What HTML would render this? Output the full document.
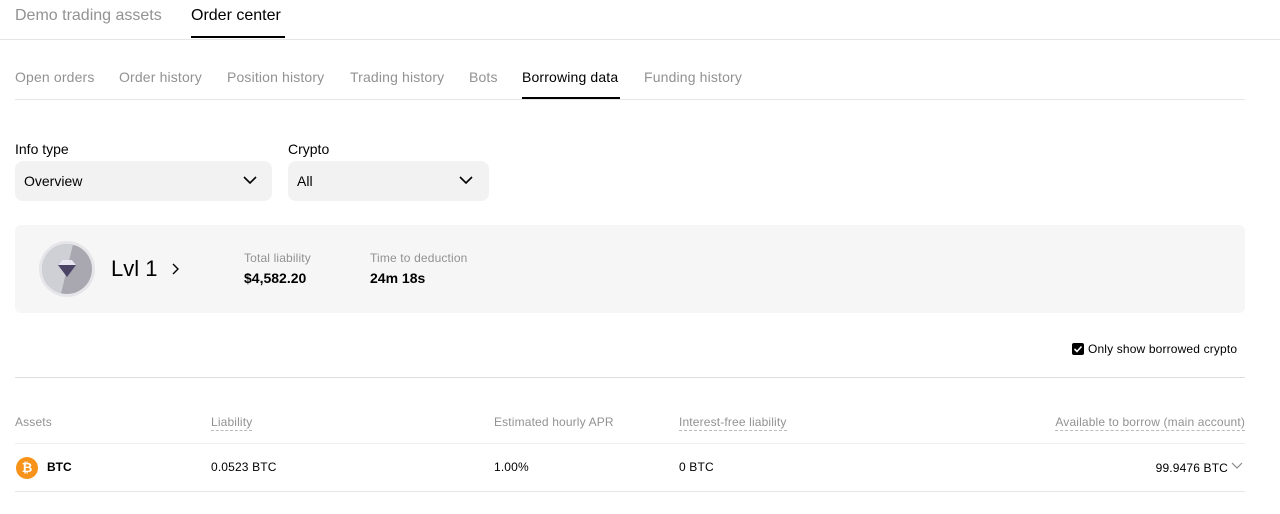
<!DOCTYPE html>
<html><head><style>
*{margin:0;padding:0;box-sizing:border-box}
body{width:1280px;height:514px;background:#fff;font-family:"Liberation Sans",sans-serif;color:#000;position:relative;overflow:hidden}
.a{position:absolute;white-space:nowrap}
.g{color:#929292}
.dash{border-bottom:1px dashed #bbb;padding-bottom:1px}
.s{letter-spacing:0.15px}
</style></head><body>
<div class="a g" style="left:15px;top:7px;font-size:16px">Demo trading assets</div>
<div class="a" style="left:191px;top:7px;font-size:16px">Order center</div>
<div class="a" style="left:191px;top:36px;width:94px;height:2px;background:#000"></div>
<div class="a" style="left:0;top:39px;width:1280px;height:1px;background:#e6e6e6"></div>

<div class="a g s" style="left:15px;top:69px;font-size:14px">Open orders</div>
<div class="a g s" style="left:119px;top:69px;font-size:14px">Order history</div>
<div class="a g s" style="left:227px;top:69px;font-size:14px">Position history</div>
<div class="a g s" style="left:350px;top:69px;font-size:14px">Trading history</div>
<div class="a g s" style="left:469px;top:69px;font-size:14px">Bots</div>
<div class="a s" style="left:522px;top:69px;font-size:14px">Borrowing data</div>
<div class="a g s" style="left:644px;top:69px;font-size:14px">Funding history</div>
<div class="a" style="left:522px;top:97px;width:98px;height:2px;background:#000"></div>
<div class="a" style="left:15px;top:99px;width:1230px;height:1px;background:#e6e6e6"></div>

<div class="a" style="left:15px;top:141px;font-size:14px">Info type</div>
<div class="a" style="left:288px;top:141px;font-size:14px">Crypto</div>
<div class="a" style="left:15px;top:161px;width:257px;height:40px;background:#f2f2f2;border-radius:8px"></div>
<div class="a" style="left:24px;top:173px;font-size:14px">Overview</div>
<svg class="a" style="left:242px;top:174px" width="16" height="12"><path d="M2 3l6 6 6-6" fill="none" stroke="#000" stroke-width="1.6"/></svg>
<div class="a" style="left:288px;top:161px;width:201px;height:40px;background:#f2f2f2;border-radius:8px"></div>
<div class="a" style="left:297px;top:173px;font-size:14px">All</div>
<svg class="a" style="left:458px;top:174px" width="16" height="12"><path d="M2 3l6 6 6-6" fill="none" stroke="#000" stroke-width="1.6"/></svg>

<div class="a" style="left:15px;top:225px;width:1230px;height:88px;background:#f6f6f6;border-radius:6px"></div>
<svg class="a" style="left:39px;top:241px" width="56" height="56"><circle cx="28" cy="28" r="28" fill="#e6e6ea"/><circle cx="28" cy="28" r="25" fill="#a9a8b0"/><path d="M34 3.5A25 25 0 0 0 28 3 25 25 0 0 0 13 48 25 25 0 0 0 22 52.5Z" fill="#cfcfd6"/><path d="M19 24l4-5h10l4 5-9 12z" fill="#4b4466"/><path d="M23 19h10l4 5H19z" fill="#e8e6f0"/></svg>
<div class="a" style="left:111px;top:256px;font-size:22px">Lvl 1</div>
<svg class="a" style="left:170px;top:262px" width="12" height="14"><path d="M3 2l5 5-5 5" fill="none" stroke="#000" stroke-width="1.4"/></svg>
<div class="a g s" style="left:244px;top:251px;font-size:12px">Total liability</div>
<div class="a" style="left:244px;top:270px;font-size:14px;font-weight:600">$4,582.20</div>
<div class="a g s" style="left:370px;top:251px;font-size:12px">Time to deduction</div>
<div class="a" style="left:370px;top:270px;font-size:14px;font-weight:600">24m 18s</div>

<div class="a" style="left:1072px;top:343px;width:12px;height:12px;background:#000;border-radius:2px"></div>
<svg class="a" style="left:1072px;top:343px" width="12" height="12"><path d="M2.5 6l2.5 2.5 4.5-5" fill="none" stroke="#fff" stroke-width="1.6"/></svg>
<div class="a s" style="left:1088px;top:342px;font-size:12px">Only show borrowed crypto</div>
<div class="a" style="left:15px;top:377px;width:1230px;height:1px;background:#ddd"></div>

<div class="a g s" style="left:15px;top:415px;font-size:12px">Assets</div>
<div class="a g s" style="left:211px;top:415px;font-size:12px"><span class="dash">Liability</span></div>
<div class="a g s" style="left:494px;top:415px;font-size:12px">Estimated hourly APR</div>
<div class="a g s" style="left:679px;top:415px;font-size:12px"><span class="dash">Interest-free liability</span></div>
<div class="a g s" style="right:35px;top:415px;font-size:12px"><span class="dash">Available to borrow (main account)</span></div>
<div class="a" style="left:15px;top:443px;width:1230px;height:1px;background:#eee"></div>
<div class="a" style="left:16px;top:457px;width:22px;height:22px;border-radius:50%;background:#f7931a;color:#fff;font-size:13px;font-weight:bold;text-align:center;line-height:22px">₿</div>
<div class="a" style="left:47px;top:460px;font-size:12px;font-weight:bold">BTC</div>
<div class="a s" style="left:211px;top:460px;font-size:12px">0.0523 BTC</div>
<div class="a s" style="left:494px;top:460px;font-size:12px">1.00%</div>
<div class="a s" style="left:679px;top:460px;font-size:12px">0 BTC</div>
<div class="a s" style="right:52px;top:461px;font-size:12px">99.9476 BTC</div>
<svg class="a" style="left:1230px;top:461px" width="14" height="10"><path d="M2 2l5 5 5-5" fill="none" stroke="#888" stroke-width="1.2"/></svg>
<div class="a" style="left:15px;top:491px;width:1230px;height:1px;background:#e6e6e6"></div>
</body></html>
